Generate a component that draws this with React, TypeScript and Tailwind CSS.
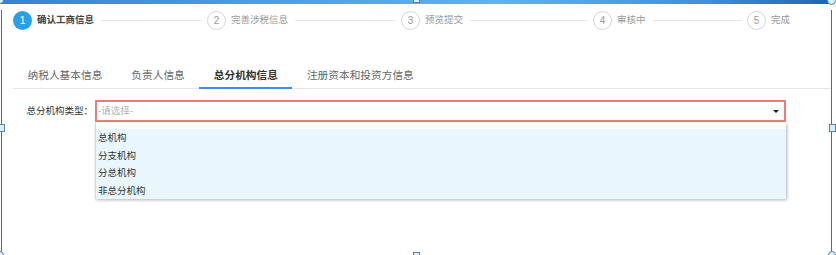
const steps = [
  { n: 1, label: "确认工商信息", w: "w-[194px]", active: true },
  { n: 2, label: "完善涉税信息", w: "w-[194px]", active: false },
  { n: 3, label: "预览提交", w: "w-[192px]", active: false },
  { n: 4, label: "审核中", w: "w-[154px]", active: false },
  { n: 5, label: "完成", w: "", active: false },
];

const tabs = ["纳税人基本信息", "负责人信息", "总分机构信息", "注册资本和投资方信息"];
const options = ["总机构", "分支机构", "分总机构", "非总分机构"];

const Handle = ({ className }: { className: string }) => (
  <div className={`absolute border border-[#5f7fa8] bg-[#d9f0fa] ${className}`} />
);

export default function App() {
  const activeTab = 2;

  return (
    <div className="relative w-[836px] h-[255px] overflow-hidden bg-white font-['Liberation_Sans','Noto_Sans_CJK_SC',sans-serif]">
      {/* window title strip */}
      <div className="w-[831px] h-[4px] bg-[linear-gradient(90deg,#3584d4_0%,#4b9be6_30%,#62b2ef_60%,#3f8fdc_85%,#2362ae_100%)]" />

      <div className="ml-[1px] w-[831px] h-[251px] border-l border-r border-[#4a6b9c]">
        {/* steps */}
        <div className="flex items-center pl-[11px] mt-[6px] h-[20px]">
          {steps.map((s, i) => (
            <div key={s.n} className={`flex items-center ${s.w}`}>
              <div
                className={
                  s.active
                    ? "w-[19px] h-[19px] rounded-full bg-[#2a9fe8] text-white text-[10px] flex items-center justify-center"
                    : "w-[19px] h-[19px] rounded-full border border-[#d6d6d6] text-[#9a9a9a] text-[10px] flex items-center justify-center"
                }
              >
                {s.n}
              </div>
              <span
                className={
                  s.active
                    ? "ml-[5px] text-[9.5px] font-bold text-[#444] whitespace-nowrap"
                    : "ml-[5px] text-[9.5px] text-[#9a9a9a] whitespace-nowrap"
                }
              >
                {s.label}
              </span>
              {i < steps.length - 1 && <div className="flex-1 h-px bg-[#e8e8e8] ml-[7px] mr-[5px]" />}
            </div>
          ))}
        </div>

        {/* tabs */}
        <div className="ml-[11px] mt-[32px] flex border-b border-[#e4e7ed]">
          {tabs.map((t, i) => (
            <div
              key={t}
              className={
                i === activeTab
                  ? "relative h-[26px] px-[14.5px] flex items-center text-[10.7px] font-bold text-[#333]"
                  : "relative h-[26px] px-[14.5px] flex items-center text-[10.7px] text-[#666]"
              }
            >
              {t}
              {i === activeTab && <div className="absolute left-0 right-0 bottom-[-1px] h-[2px] bg-[#3e8ee9]" />}
            </div>
          ))}
        </div>

        {/* form */}
        <div className="flex mt-[11px]">
          <label className="w-[93px] pr-[2px] h-[22px] flex items-center justify-end text-[9.5px] text-[#333] whitespace-nowrap">
            总分机构类型：
          </label>
          <div className="relative w-[691px]">
            <div className="h-[22px] border-2 border-[#f37878] flex items-center justify-between pl-[1px] pr-[5px]">
              <span className="text-[9.5px] text-[#b3b3b3]">-请选择-</span>
              <div className="w-0 h-0 border-l-[3px] border-r-[3px] border-t-[3px] border-l-transparent border-r-transparent border-t-[#222]" />
            </div>
            <div className="absolute left-0 right-0 top-[23px] bg-white pt-[6px] border-l border-[#d9d9d9] shadow-[1px_1px_3px_rgba(0,0,0,0.3)]">
              <ul className="bg-[#e9f6fd]">
                {options.map((o) => (
                  <li key={o} className="h-[17.5px] leading-[17.5px] pl-[2px] text-[9.5px] text-[#333]">
                    {o}
                  </li>
                ))}
              </ul>
            </div>
          </div>
        </div>
      </div>

      {/* selection handles */}
      <Handle className="left-[413px] top-[-4px] w-[7px] h-[7px]" />
      <Handle className="left-[413px] top-[252px] w-[7px] h-[7px]" />
      <Handle className="left-[-1px] top-[124px] w-[6px] h-[8px]" />
      <Handle className="left-[829px] top-[124px] w-[7px] h-[8px]" />
      <Handle className="left-[-4px] top-[-4px] w-[8px] h-[8px] rounded-full" />
      <Handle className="left-[827px] top-[-4px] w-[9px] h-[9px] rounded-full" />
      <Handle className="left-[-4px] top-[251px] w-[8px] h-[8px] rounded-full" />
      <Handle className="left-[828px] top-[251px] w-[8px] h-[8px] rounded-full" />
    </div>
  );
}
